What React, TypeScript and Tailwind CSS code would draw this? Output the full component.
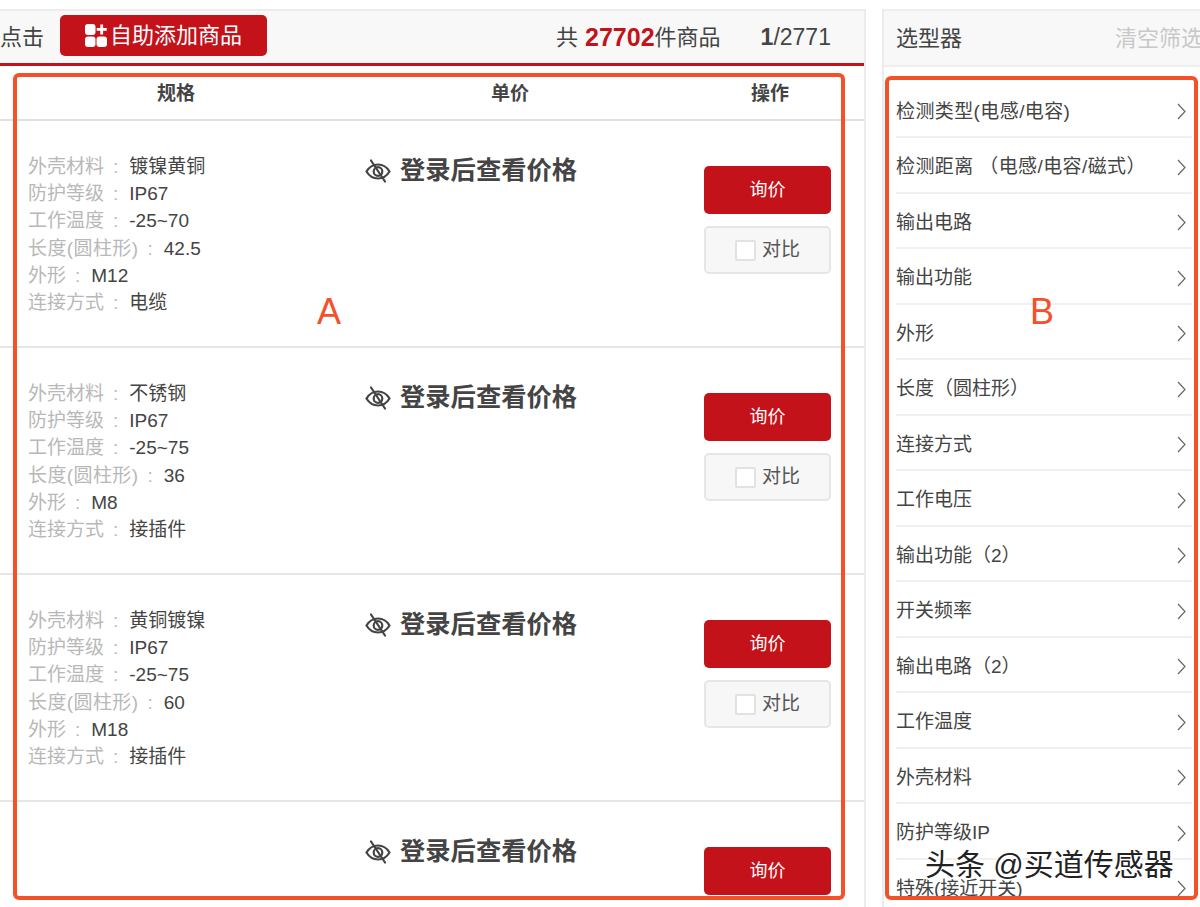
import React from "react";

const F = "font-['Liberation_Sans','Noto_Sans_CJK_SC',sans-serif]";

const products = [
  { specs: [["外壳材料", "镀镍黄铜"], ["防护等级", "IP67"], ["工作温度", "-25~70"], ["长度(圆柱形)", "42.5"], ["外形", "M12"], ["连接方式", "电缆"]] },
  { specs: [["外壳材料", "不锈钢"], ["防护等级", "IP67"], ["工作温度", "-25~75"], ["长度(圆柱形)", "36"], ["外形", "M8"], ["连接方式", "接插件"]] },
  { specs: [["外壳材料", "黄铜镀镍"], ["防护等级", "IP67"], ["工作温度", "-25~75"], ["长度(圆柱形)", "60"], ["外形", "M18"], ["连接方式", "接插件"]] },
];

const filters = ["检测类型(电感/电容)", "检测距离 （电感/电容/磁式）", "输出电路", "输出功能", "外形", "长度（圆柱形）", "连接方式", "工作电压", "输出功能（2）", "开关频率", "输出电路（2）", "工作温度", "外壳材料", "防护等级IP", "特殊(接近开关)"];

function EyeOff() {
  return (
    <svg width="26" height="26" viewBox="0 0 26 26" fill="none" stroke="#444" strokeWidth="2.2" strokeLinecap="round" className="shrink-0">
      <path d="M1.5 13.5C4.500 8.500 8.500 6.500 13 6.500s8.500 2 11.500 7c-3 5-7 7-11.500 7s-8.500-2-11.500-7z" />
      <circle cx="13" cy="13.500" r="4.300" />
      <path d="M6 2.500l14 21" />
    </svg>
  );
}

function AddIcon() {
  return (
    <svg width="22" height="23" viewBox="0 0 22 23" fill="#fff" className="shrink-0">
      <rect x="0" y="0" width="10.500" height="11" rx="3" />
      <rect x="0" y="12.500" width="10.500" height="10.500" rx="3" />
      <rect x="11.500" y="12.500" width="10.500" height="10.500" rx="3" />
      <rect x="15.300" y="0.500" width="2.800" height="10" />
      <rect x="11.700" y="4" width="10" height="2.800" />
    </svg>
  );
}

function PriceAndActions({ compare = true }: { compare?: boolean }) {
  return (
    <>
      <div className="w-[334px] ml-[46px] pt-[33px] flex items-center gap-[9px] h-[66px] text-[25.300px] font-bold text-[#444] leading-none">
        <EyeOff />
        <span>登录后查看价格</span>
      </div>
      <div className="ml-[5px] w-[127px] pt-[45px] flex flex-col gap-[12px]">
        <div className="h-[48px] rounded-[5px] bg-[#c4121a] text-white text-[18px] flex items-center justify-center">询价</div>
        {compare && (
          <div className="h-[48px] rounded-[5px] bg-[#f7f7f7] border-2 border-[#e6e6e6] text-[#555] text-[19px] flex items-center justify-center gap-[6px]">
            <span className="w-[21px] h-[21px] bg-white border-2 border-[#e2e2e2] rounded-[2px]" />
            <span>对比</span>
          </div>
        )}
      </div>
    </>
  );
}

function Row({ specs }: { specs: string[][] }) {
  return (
    <div className="h-[227px] border-b-2 border-[#e6e6e6] bg-white flex shrink-0">
      <div className="w-[319px] pl-[28px] pt-[32px] shrink-0 text-[19px] leading-[27.200px]">
        {specs.map(([k, v]) => (
          <div key={k} className="whitespace-nowrap">
            <span className={k.includes("(") ? "text-[#b8b8b8] tracking-[0.400px]" : "text-[#b8b8b8]"}>{k}</span>
            <span className="text-[#b8b8b8] ml-[9px]">:</span>
            <span className="text-[#444] ml-[11px]">{v}</span>
          </div>
        ))}
      </div>
      <PriceAndActions />
    </div>
  );
}

export default function App() {
  return (
    <div className={`${F} relative w-[1200px] h-[907px] overflow-hidden bg-white pt-[9px] flex`}>
      <div className="w-[866px] h-full shrink-0 border-r-2 border-[#ececec] flex flex-col">
        <div className="h-[54px] shrink-0 bg-[#f8f8f8] border-t-2 border-[#ececec] flex items-center text-[22px] text-[#444]">
          <span>点击</span>
          <div className="ml-[16px] -mt-[4px] w-[207px] h-[41px] rounded-[5px] bg-[#c4121a] text-white text-[22px] flex items-center pl-[25px] gap-[3px]">
            <AddIcon />
            <span>自助添加商品</span>
          </div>
          <span className="ml-[289px]">共</span>
          <span className="ml-[7px] font-bold text-[#c4121a] text-[25px] leading-none">27702</span>
          <span>件商品</span>
          <span className="ml-[40px] font-bold text-[23px] leading-none">1</span>
          <span className="text-[23px] leading-none">/2771</span>
        </div>
        <div className="h-[3px] shrink-0 bg-[#c4121a]" />
        <div className="h-[55px] shrink-0 border-b-2 border-[#e0e0e0] flex items-center text-[19px] font-bold text-[#444] pt-[3px]">
          <span className="ml-[157px]">规格</span>
          <span className="ml-[296px]">单价</span>
          <span className="ml-[222px]">操作</span>
        </div>
        {products.map((p, i) => (
          <Row key={i} specs={p.specs} />
        ))}
        <div className="flex-1 flex bg-white">
          <div className="w-[319px] shrink-0" />
          <PriceAndActions compare={false} />
        </div>
      </div>

      <div className="ml-[16px] flex-1 min-w-0 h-full border-l-2 border-[#ececec] flex flex-col">
        <div className="h-[58px] shrink-0 bg-[#f8f8f8] border-t-2 border-b-2 border-[#eeeeee] flex items-center justify-between pl-[12px] text-[22px] whitespace-nowrap overflow-hidden">
          <span className="text-[#444]">选型器</span>
          <span className="text-[#c8c8c8] -mr-[3px]">清空筛选</span>
        </div>
        <div className="pl-[12px] pt-[15.500px] pr-[8px]">
          {filters.map((f) => (
            <div key={f} className={`h-[55.500px] border-b-2 border-[#f0f0f0] flex items-center justify-between text-[19px] text-[#444] whitespace-nowrap pt-[5px] ${f.includes("/") ? "tracking-[0.400px]" : ""}`}>
              <span>{f}</span>
              <svg width="9" height="17" viewBox="0 0 9 17" fill="none" stroke="#666" strokeWidth="1.200" className="shrink-0 mr-[6px]">
                <path d="M1 1l7 7.500L1 16" />
              </svg>
            </div>
          ))}
        </div>
      </div>

      {/* annotation overlays */}
      <div className="absolute left-[13px] top-[73px] w-[832px] h-[827px] border-[4px] border-[#f4502a] rounded-[6px] pointer-events-none" />
      <div className="absolute left-[885px] top-[76px] w-[313px] h-[824px] border-[4px] border-[#f4502a] rounded-[6px] pointer-events-none" />
      <div className="absolute left-[317px] top-[292px] text-[36px] leading-[40px] text-[#f4502a]">A</div>
      <div className="absolute left-[1030px] top-[292px] text-[36px] leading-[40px] text-[#f4502a]">B</div>
      <div className="absolute left-[925px] top-[846px] text-[30px] leading-[38px] text-[#222] whitespace-nowrap [text-shadow:1px_1px_0_#fff,-1px_-1px_0_#fff,1px_-1px_0_#fff,-1px_1px_0_#fff,0_2px_0_#fff,2px_0_0_#fff]">头条 @买道传感器</div>
    </div>
  );
}
